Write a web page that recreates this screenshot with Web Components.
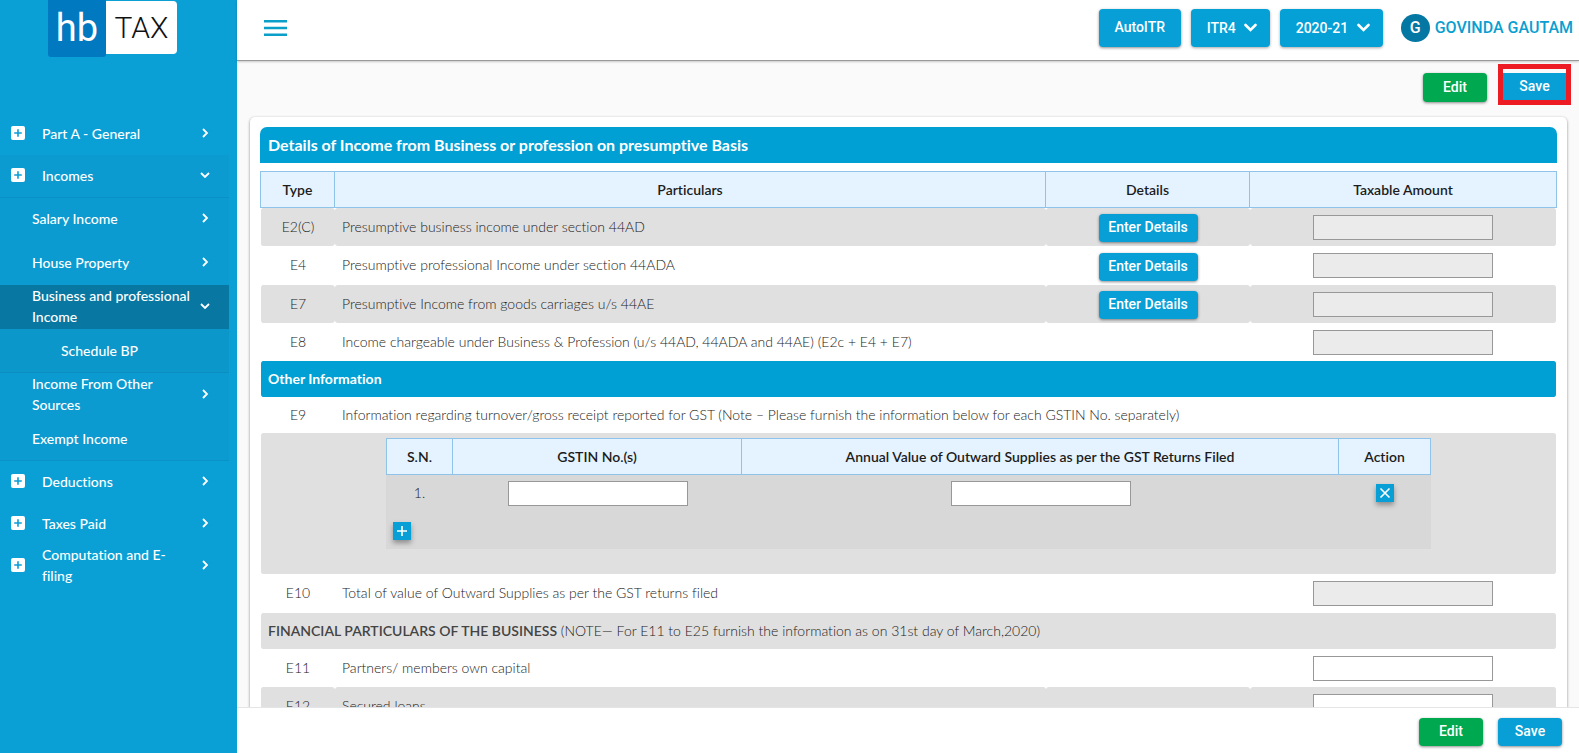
<!DOCTYPE html>
<html lang="en">
<head>
<meta charset="utf-8">
<title>hbTAX - Business and professional Income</title>
<style>
  html, body { height: 100%; margin: 0; }
  body { font: 14px/21px Lato, "Liberation Sans", sans-serif; font-variant-ligatures: none; color: #222; background: #fafafa; }
</style>
</head>
<body>
<tax-app></tax-app>

<template id="tax-app">
  <style>
    :host { display: grid; grid-template-columns: 237px minmax(0, 1fr); height: 100vh; overflow: hidden; }
    .main { display: flex; flex-direction: column; min-width: 0; min-height: 0; }
    .content { flex: 1; min-height: 0; overflow: auto; scrollbar-width: none; }
    .actions { display: flex; justify-content: flex-end; align-items: flex-end; gap: 11px; padding: 3px 8px 12px; }
    .actions > app-button { --height: 29px; margin-bottom: 3px; }
    .marked { display: flex; border: 5px solid #ed1c24; }
    .marked app-button { --radius: 0; --height: 27px; --bw: 63px; padding-top: 4px; --shadow: none; }
    .card { margin: 0 12px 24px 13px; padding: 10px; background: #fff; border-radius: 5px; box-shadow: 0 1px 3px rgba(0,0,0,.45); }
    h1 { margin: 0 0 8px; padding: 0 8px; font-size: 16px; line-height: 36px; font-weight: 700; color: #fff; background: #00a0d4; border-radius: 7px 7px 0 0; }
    footer { display: flex; justify-content: flex-end; align-items: center; gap: 15px; box-sizing: border-box; height: 46px; padding: 3px 17px 0; background: #fff; border-top: 1px solid #e3e5e6; }
  </style>
  <side-bar></side-bar>
  <div class="main">
    <top-bar></top-bar>
    <div class="content">
      <div class="actions">
        <app-button tone="green">Edit</app-button>
        <div class="marked"><app-button>Save</app-button></div>
      </div>
      <section class="card">
        <h1>Details of Income from Business or profession on presumptive Basis</h1>
        <income-table></income-table>
      </section>
    </div>
    <footer>
      <app-button tone="green">Edit</app-button>
      <app-button>Save</app-button>
    </footer>
  </div>
</template>

<template id="app-button">
  <style>
    :host { display: inline-block; }
    button { display: flex; align-items: center; justify-content: center; box-sizing: border-box; width: var(--bw, 64px); height: var(--height, 28px); padding: 0 0 2px; border: 0; border-radius: var(--radius, 4px);
      font: 500 14px/20px Roboto, sans-serif; color: #fff; background: #089fd6; box-shadow: var(--shadow, 0 1px 3px rgba(0,0,0,.45)); cursor: pointer; white-space: nowrap; }
    :host([tone="green"]) button { background: #00a84f; }
  </style>
  <button type="button"><slot></slot></button>
</template>

<template id="app-select">
  <style>
    :host { display: inline-grid; align-items: center; }
    select, svg { grid-area: 1 / 1; }
    select { appearance: none; width: var(--bw); height: 38px; padding: 0 0 0 16px; border: 0; border-radius: 4px; font: 500 14px/20px Roboto, sans-serif; color: #fff; background: #04a0d6; box-shadow: 0 1px 3px rgba(0,0,0,.35); }
    svg { justify-self: end; margin-right: 13px; pointer-events: none; }
  </style>
  <select></select>
  <svg width="13" height="9" viewBox="0 0 13 9" fill="none" stroke="#fff" stroke-width="2.6" stroke-linecap="round"><path d="M1.5 2 6.5 7 11.5 2"/></svg>
</template>

<template id="top-bar">
  <style>
    :host { display: flex; align-items: center; flex: none; box-sizing: border-box; height: 61px; padding: 0 6px 5px 27px; background: #fff; border-bottom: 1px solid #999; box-shadow: 0 1px 2px rgba(0,0,0,.2); z-index: 1; }
    .menu { padding: 0; border: 0; background: none; display: flex; margin-right: auto; cursor: pointer; }
    .group { display: flex; gap: 10px; }
    .user { display: flex; align-items: center; gap: 5px; margin-left: 18px; font: 500 16px/24px Roboto, sans-serif; color: #0a9fd0; text-decoration: none; }
    .avatar { display: grid; place-items: center; width: 29px; height: 28px; border-radius: 50%; background: #0477a2; color: #fff; }
  </style>
  <button class="menu" type="button" aria-label="Toggle menu">
    <svg width="23" height="16" viewBox="0 0 23 16" fill="#0a9fc8"><path d="M0 0h23v2.5H0zM0 6.7h23v2.5H0zM0 13.4h23v2.5H0z"/></svg>
  </button>
  <div class="group">
    <app-button style="--bw:82px;--height:38px">AutoITR</app-button>
    <app-select style="--bw:79px" value="ITR4" label="ITR form"></app-select>
    <app-select style="--bw:103px" value="2020-21" label="Assessment year"></app-select>
  </div>
  <a class="user" href="#profile"><span class="avatar">G</span>GOVINDA GAUTAM</a>
</template>

<template id="side-bar">
  <style>
    :host { display: block; background: #0a9fd5; overflow: hidden; }
    .logo { display: flex; align-items: flex-start; height: 57px; margin: 0 0 56px 48px; text-decoration: none; }
    .hb { width: 58px; height: 57px; border-radius: 0 0 3px 3px; background: #0079c1; color: #fff; font: 400 38px/57px Roboto, sans-serif; text-align: center; }
    .tax { width: 71px; height: 53px; margin-top: 1px; border-radius: 0 4px 4px 0; background: #fff; color: #111; font: 300 30px/53px Roboto, sans-serif; text-align: center; }
    nav { width: 229px; }
    .open { background: #0b9bd0; box-shadow: inset 0 -1px #0a93c7; }
    .sub { box-shadow: inset 0 1px #0a90c4; }
    .leaf { padding-top: 1px; background: #0b97ca; border-bottom: 1px solid #0a8fc0; }
  </style>
  <a class="logo" href="#home"><span class="hb">hb</span><span class="tax">TAX</span></a>
  <nav>
    <nav-item icon arrow="right">Part A - General</nav-item>
    <div class="open">
      <nav-item icon arrow="down">Incomes</nav-item>
      <div class="sub">
        <nav-item level="2" arrow="right">Salary Income</nav-item>
        <nav-item level="2" arrow="right">House Property</nav-item>
        <nav-item level="2" arrow="down" active>Business and professional Income</nav-item>
        <div class="leaf"><nav-item level="3">Schedule BP</nav-item></div>
        <nav-item level="2" arrow="right">Income From Other Sources</nav-item>
        <nav-item level="2">Exempt Income</nav-item>
      </div>
    </div>
    <nav-item icon arrow="right">Deductions</nav-item>
    <nav-item icon arrow="right">Taxes Paid</nav-item>
    <nav-item icon arrow="right">Computation and E-filing</nav-item>
  </nav>
</template>

<template id="nav-item">
  <style>
    :host { display: block; }
    a { display: flex; align-items: center; box-sizing: border-box; height: 42px; padding: 0 17px 2px 11px; color: #fff; font-weight: 500; text-decoration: none; }
    .plus { flex: none; margin-right: 17px; }
    .label { flex: 1; }
    :host([icon]) .label { padding-right: 24px; }
    .arrow { display: none; flex: none; width: 14px; height: 14px; }
    :host([arrow]) .arrow { display: block; }
    :host([arrow="down"]) .arrow { transform: rotate(90deg); }
    :host(:not([icon])) .plus { display: none; }
    :host([level="2"]) a { height: 44px; padding-left: 32px; }
    :host([level="3"]) a { padding-left: 61px; }
    :host([active]) a { background: #0878a2; }
  </style>
  <a href="#section">
    <svg class="plus" width="14" height="14" viewBox="0 0 14 14"><rect width="14" height="14" rx="2" fill="#fff"/><path d="M7 3.2v7.6M3.2 7h7.6" stroke="#0a9fd5" stroke-width="1.6"/></svg>
    <span class="label"><slot></slot></span>
    <svg class="arrow" viewBox="0 0 14 14" fill="none" stroke="#fff" stroke-width="1.8"><path d="M5 3 9 7 5 11"/></svg>
  </a>
</template>

<template id="table-styles">
  <style>
    :host { display: block; }
    table { width: 100%; table-layout: fixed; border-spacing: 0; }
    th { box-sizing: border-box; height: 37px; padding: 0; border: solid #8fc3ea; border-width: 1px 1px 1px 0; background: #e4f3ff; color: #1c1c1c; font-weight: 600; text-align: center; }
    th:first-child { border-left-width: 1px; }
    td { box-sizing: border-box; height: 38px; padding: 0 0 2px; font-weight: 300; }
    td:has(input) { padding-bottom: 0; }
    input { display: block; box-sizing: border-box; width: 180px; height: 25px; margin: 0 auto; padding: 0 4px; border: 1px solid #989898; border-radius: 0; background: #fff; font: inherit; }
    input:disabled { background: #ebebeb; }
  </style>
</template>

<template id="income-table">
  <style>
    .type { width: 75px; } .details { width: 204px; } .amount { width: 307px; }
    td { border-radius: 3px; background-clip: padding-box; }
    td:first-child { border-left: 1px solid transparent; text-align: center; }
    td:last-child { border-right: 1px solid transparent; }
    td:nth-child(2) { padding-left: 7px; }
    td:has(app-button) { padding: 2px 0 0; }
    app-button { --bw: 99px; display: block; width: 99px; margin: 0 auto; }
    .shade td { background-color: #e0e0e0; }
    .tall td { height: 39px; }
    td.section { height: 36px; padding-left: 7px; text-align: left; }
    td.blue { background-color: #00a0d4; color: #fff; font-weight: 700; }
    td.note { height: 36px; }
    td.nested { height: 141px; padding: 5px 125px 0; vertical-align: top; }
    b { font-weight: 600; color: #444; }
  </style>
  <table>
    <colgroup><col class="type"><col><col class="details"><col class="amount"></colgroup>
    <thead><tr><th>Type</th><th>Particulars</th><th>Details</th><th>Taxable Amount</th></tr></thead>
    <tbody>
      <tr class="shade"><td>E2(C)</td><td id="e2">Presumptive business income under section 44AD</td><td><app-button>Enter Details</app-button></td><td><input disabled aria-labelledby="e2"></td></tr>
      <tr class="tall"><td>E4</td><td id="e4">Presumptive professional Income under section 44ADA</td><td><app-button>Enter Details</app-button></td><td><input disabled aria-labelledby="e4"></td></tr>
      <tr class="shade"><td>E7</td><td id="e7">Presumptive Income from goods carriages u/s 44AE</td><td><app-button>Enter Details</app-button></td><td><input disabled aria-labelledby="e7"></td></tr>
      <tr><td>E8</td><td id="e8" colspan="2">Income chargeable under Business &amp; Profession (u/s 44AD, 44ADA and 44AE) (E2c + E4 + E7)</td><td><input disabled aria-labelledby="e8"></td></tr>
      <tr><td class="section blue" colspan="4">Other Information</td></tr>
      <tr><td class="note">E9</td><td class="note" colspan="3">Information regarding turnover/gross receipt reported for GST (Note – Please furnish the information below for each GSTIN No. separately)</td></tr>
      <tr class="shade"><td class="nested" colspan="4"><gst-table></gst-table></td></tr>
      <tr class="tall"><td>E10</td><td id="e10" colspan="2">Total of value of Outward Supplies as per the GST returns filed</td><td><input disabled aria-labelledby="e10"></td></tr>
      <tr class="shade"><td class="section" colspan="4"><b>FINANCIAL PARTICULARS OF THE BUSINESS</b> (NOTE— For E11 to E25 furnish the information as on 31st day of March,2020)</td></tr>
      <tr><td>E11</td><td id="e11" colspan="2">Partners/ members own capital</td><td><input aria-labelledby="e11"></td></tr>
      <tr class="shade"><td>E12</td><td id="e12">Secured loans</td><td></td><td><input aria-labelledby="e12"></td></tr>
    </tbody>
  </table>
</template>

<template id="gst-table">
  <style>
    .sn { width: 67px; } .gstin { width: 289px; } .action { width: 92px; }
    td { height: 37px; background: #d8d8d8; text-align: center; }
    td.add { padding: 0 0 0 7px; }
    button { display: grid; place-items: center; width: 18px; height: 18px; margin: 0 auto; padding: 0; border: 0; background: #089fd6; box-shadow: 0 3px 5px rgba(0,0,0,.35); cursor: pointer; }
    .add button { margin: 0; }
  </style>
  <table>
    <colgroup><col class="sn"><col class="gstin"><col><col class="action"></colgroup>
    <thead><tr><th>S.N.</th><th id="gstin">GSTIN No.(s)</th><th id="value">Annual Value of Outward Supplies as per the GST Returns Filed</th><th>Action</th></tr></thead>
    <tbody>
      <tr><td>1.</td><td><input aria-labelledby="gstin"></td><td><input aria-labelledby="value"></td>
        <td><button type="button" aria-label="Remove row"><svg width="12" height="12" viewBox="0 0 12 12" stroke="#fff" stroke-width="1.6"><path d="M1.5 1.5l9 9M10.5 1.5l-9 9"/></svg></button></td></tr>
      <tr><td class="add" colspan="4"><button type="button" aria-label="Add row"><svg width="12" height="12" viewBox="0 0 12 12" stroke="#fff" stroke-width="1.6"><path d="M6 1v10M1 6h10"/></svg></button></td></tr>
    </tbody>
  </table>
</template>

<script>
  const part = id => document.getElementById(id).content.cloneNode(true);

  function define(name, shared = []) {
    customElements.define(name, class extends HTMLElement {
      constructor() {
        super();
        this.attachShadow({ mode: "open" }).append(...[...shared, name].map(part));
      }
    });
  }

  define("app-button");

  customElements.define("app-select", class extends HTMLElement {
    connectedCallback() {
      if (this.shadowRoot) return;
      const root = this.attachShadow({ mode: "open" });
      root.append(part("app-select"));
      const select = root.querySelector("select");
      select.setAttribute("aria-label", this.getAttribute("label"));
      select.add(new Option(this.getAttribute("value")));
    }
  });

  define("nav-item");
  define("top-bar");
  define("side-bar");
  define("gst-table", ["table-styles"]);
  define("income-table", ["table-styles"]);
  define("tax-app");
</script>
</body>
</html>
